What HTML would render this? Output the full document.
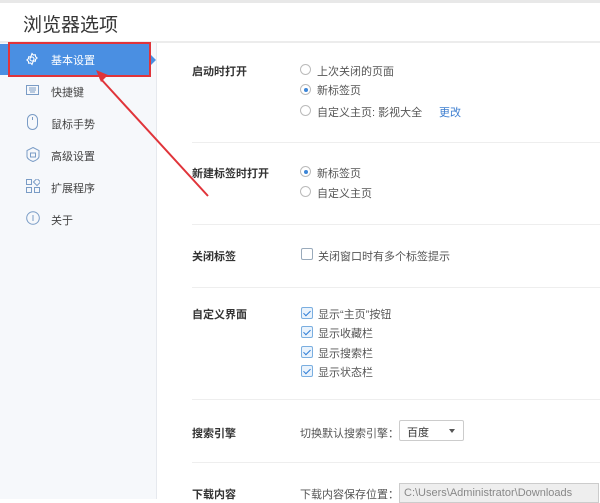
<!DOCTYPE html>
<html><head><meta charset="utf-8"><style>
*{margin:0;padding:0;box-sizing:border-box}
body{width:600px;height:499px;overflow:hidden;background:#fff;font-family:"Liberation Sans","Noto Sans CJK SC",sans-serif;font-size:11px;color:#333;position:relative}
.a{position:absolute;white-space:nowrap}
.top{position:absolute;left:0;top:0;width:600px;height:3px;background:#e8e8e8}
.hl{position:absolute;left:0;top:41px;width:600px;height:2px;background:#ececec}
.side{position:absolute;left:0;top:43px;width:157px;height:456px;background:#f6f8fb;border-right:1px solid #e6e9ee}
.act{position:absolute;left:0;top:44px;width:150px;height:31px;background:#4a8fe2}
.red{position:absolute;left:8px;top:42px;width:143px;height:35px;border:2px solid #e0343a}
.si{color:#444;font-size:11px}
.lab{font-weight:bold;color:#333;font-size:11px}
.op{color:#555}
.rad{position:absolute;width:11px;height:11px;border:1px solid #bbb;border-radius:50%;background:#fff}
.rad.on::after{content:"";position:absolute;left:2.5px;top:2.5px;width:4px;height:4px;border-radius:50%;background:#3d86d8}
.cb{position:absolute;width:12px;height:12px;border:1px solid #9ab;border-radius:2px;background:#fff}
.cb.on{border-color:#7aaee0;background:#eaf3fc}
.cb.on::after{content:"";position:absolute;left:3px;top:1px;width:3px;height:6px;border:solid #2f7ed8;border-width:0 1.5px 1.5px 0;transform:rotate(45deg)}
.div{position:absolute;left:192px;width:408px;height:1px;background:#eee}
</style></head><body>
<div class="top"></div>
<div class="a" style="left:23px;top:10px;font-size:19px;color:#333">浏览器选项</div>
<div class="hl"></div>
<div class="side"></div>
<div class="act"></div>
<div class="a" style="left:150px;top:54px;width:0;height:0;border-top:6px solid transparent;border-bottom:6px solid transparent;border-left:6px solid #4a8fe2"></div>
<div class="red"></div>
<svg class="a" style="left:25px;top:52px" width="14" height="14" viewBox="0 0 14 14" fill="none" stroke="#fff" stroke-width="1.1"><circle cx="7" cy="7" r="2"/><path d="M7 1.5l1.3 1.5 2-.3.3 2 1.5 1.3-1.5 1.3-.3 2-2-.3L7 12.5 5.7 11l-2 .3-.3-2L1.9 8 3.4 6.7l.3-2 2 .3z"/></svg>
<div class="a si" style="left:51px;top:52px;color:#fff">基本设置</div>
<svg class="a" style="left:26px;top:85px" width="13" height="10"><rect x=".5" y=".5" width="12" height="9" fill="none" stroke="#7a9cc6"/><path d="M3 3h7M3 5h7M4 7h5" stroke="#7a9cc6"/></svg>
<div class="a si" style="left:51px;top:84px">快捷键</div>
<svg class="a" style="left:27px;top:114px" width="11" height="16"><rect x=".5" y=".5" width="10" height="15" rx="5" fill="none" stroke="#7a9cc6"/><path d="M5.5 3v3" stroke="#7a9cc6"/></svg>
<div class="a si" style="left:51px;top:116px">鼠标手势</div>
<svg class="a" style="left:26px;top:147px" width="14" height="15"><path d="M7 .5l6 3v6c0 2-3 4-6 5-3-1-6-3-6-5v-6z" fill="none" stroke="#7a9cc6"/><rect x="4.5" y="6" width="5" height="4" fill="none" stroke="#7a9cc6"/></svg>
<div class="a si" style="left:51px;top:148px">高级设置</div>
<svg class="a" style="left:26px;top:179px" width="14" height="14" fill="none" stroke="#7a9cc6"><rect x=".5" y=".5" width="5" height="5"/><rect x="8.5" y=".5" width="5" height="5" transform="rotate(45 11 3)"/><rect x=".5" y="8.5" width="5" height="5"/><rect x="8.5" y="8.5" width="5" height="5"/></svg>
<div class="a si" style="left:51px;top:180px">扩展程序</div>
<svg class="a" style="left:26px;top:211px" width="14" height="14" fill="none" stroke="#7a9cc6"><circle cx="7" cy="7" r="6.3"/><path d="M7 4v6"/></svg>
<div class="a si" style="left:51px;top:212px">关于</div>

<div class="a lab" style="left:192px;top:63px">启动时打开</div>
<div class="rad" style="left:300px;top:64px"></div><div class="a op" style="left:317px;top:63px">上次关闭的页面</div>
<div class="rad on" style="left:300px;top:84px"></div><div class="a op" style="left:317px;top:82px">新标签页</div>
<div class="rad" style="left:300px;top:105px"></div><div class="a op" style="left:317px;top:104px">自定义主页: 影视大全</div>
<div class="a" style="left:439px;top:104px;color:#3f7fd0">更改</div>
<div class="div" style="top:142px"></div>
<div class="a lab" style="left:192px;top:165px">新建标签时打开</div>
<div class="rad on" style="left:300px;top:166px"></div><div class="a op" style="left:317px;top:165px">新标签页</div>
<div class="rad" style="left:300px;top:186px"></div><div class="a op" style="left:317px;top:185px">自定义主页</div>
<div class="div" style="top:224px"></div>
<div class="a lab" style="left:192px;top:248px">关闭标签</div>
<div class="cb" style="left:301px;top:248px"></div><div class="a op" style="left:318px;top:248px">关闭窗口时有多个标签提示</div>
<div class="div" style="top:287px"></div>
<div class="a lab" style="left:192px;top:306px">自定义界面</div>
<div class="cb on" style="left:301px;top:307px"></div><div class="a op" style="left:318px;top:306px">显示“主页”按钮</div>
<div class="cb on" style="left:301px;top:326px"></div><div class="a op" style="left:318px;top:325px">显示收藏栏</div>
<div class="cb on" style="left:301px;top:346px"></div><div class="a op" style="left:318px;top:345px">显示搜索栏</div>
<div class="cb on" style="left:301px;top:365px"></div><div class="a op" style="left:318px;top:364px">显示状态栏</div>
<div class="div" style="top:399px"></div>
<div class="a lab" style="left:192px;top:425px">搜索引擎</div>
<div class="a op" style="left:300px;top:425px">切换默认搜索引擎：</div>
<div class="a" style="left:399px;top:420px;width:65px;height:21px;border:1px solid #ccc;border-radius:2px;padding:3px 7px;color:#333">百度</div>
<div class="a" style="left:449px;top:429px;border-left:3px solid transparent;border-right:3px solid transparent;border-top:4px solid #555"></div>
<div class="div" style="top:462px"></div>
<div class="a lab" style="left:192px;top:486px">下载内容</div>
<div class="a op" style="left:300px;top:486px">下载内容保存位置：</div>
<div class="a" style="left:399px;top:483px;width:200px;height:20px;border:1px solid #ccc;background:#eee;padding:3px 4px;color:#888">C:\Users\Administrator\Downloads</div>

<svg class="a" style="left:0;top:0" width="600" height="499"><path d="M208 196L100 78" stroke="#e0343a" stroke-width="2"/><path d="M96 70l12 5-7 7z" fill="#e0343a"/></svg>
</body></html>
